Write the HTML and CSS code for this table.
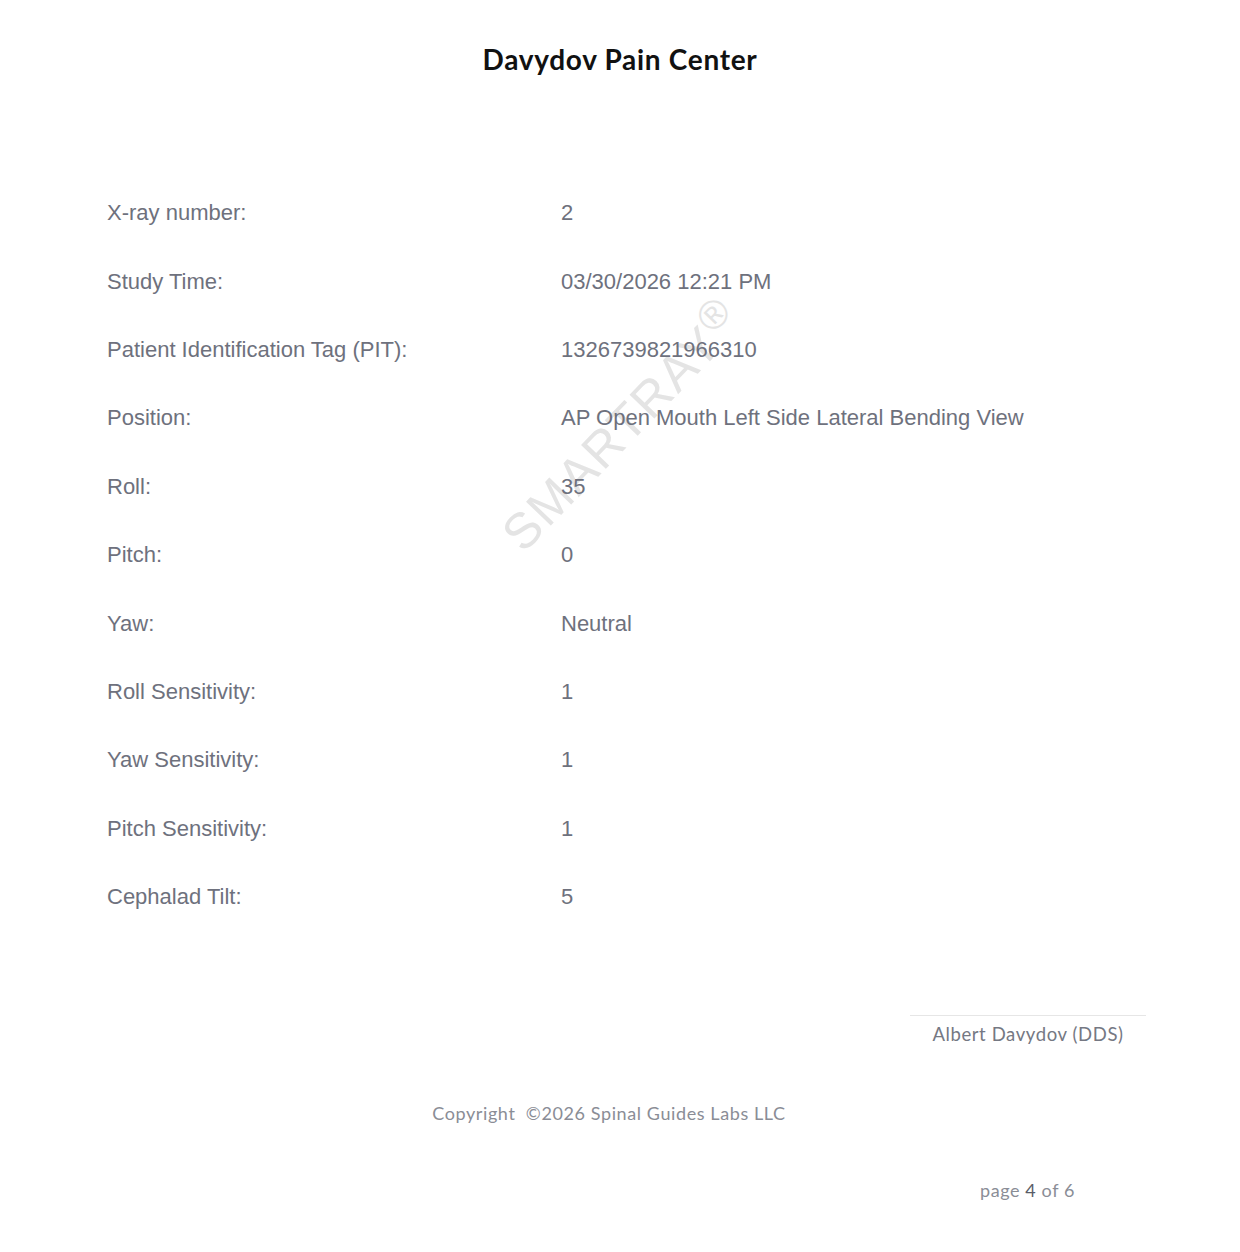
FILE: index.html
```html
<!DOCTYPE html>
<html>
<head>
<meta charset="utf-8">
<link rel="stylesheet" href="styles.css">
</head>
<body>
<div class="page">
  <h1 class="title">Davydov Pain Center</h1>
  <div class="details">
    <div class="watermark">SMARTRAY<span class="reg">®</span></div>
    <div class="row"><div class="label">X-ray number:</div><div class="value">2</div></div>
    <div class="row"><div class="label">Study Time:</div><div class="value">03/30/2026 12:21 PM</div></div>
    <div class="row"><div class="label">Patient Identification Tag (PIT):</div><div class="value">1326739821966310</div></div>
    <div class="row"><div class="label">Position:</div><div class="value">AP Open Mouth Left Side Lateral Bending View</div></div>
    <div class="row"><div class="label">Roll:</div><div class="value">35</div></div>
    <div class="row"><div class="label">Pitch:</div><div class="value">0</div></div>
    <div class="row"><div class="label">Yaw:</div><div class="value">Neutral</div></div>
    <div class="row"><div class="label">Roll Sensitivity:</div><div class="value">1</div></div>
    <div class="row"><div class="label">Yaw Sensitivity:</div><div class="value">1</div></div>
    <div class="row"><div class="label">Pitch Sensitivity:</div><div class="value">1</div></div>
    <div class="row"><div class="label">Cephalad Tilt:</div><div class="value">5</div></div>
  </div>
  <div class="signature">
    <div class="sig-box">
      <div class="sig-line"></div>
      <div class="sig-name">Albert Davydov (DDS)</div>
    </div>
  </div>
  <div class="copyright">Copyright&nbsp; ©2026 Spinal Guides Labs LLC</div>
  <div class="pager"><span class="pager-text">page <b>4</b> of 6</span></div>
</div>
</body>
</html>
```
FILE: styles.css
```css
html, body {
  margin: 0;
  padding: 0;
  background: #ffffff;
}

.page {
  width: 1240px;
  height: 1252px;
  position: relative;
  overflow: hidden;
}

.title {
  margin: 0;
  padding-top: 41px;
  font-family: Lato, "Noto Sans", sans-serif;
  font-weight: 700;
  font-size: 28px;
  letter-spacing: 0.7px;
  line-height: 36px;
  color: #111111;
  text-align: center;
}

.details {
  position: relative;
  isolation: isolate;
  margin-top: 102px;
  padding-left: 107px;
  font-family: "Liberation Sans", Arial, sans-serif;
  font-size: 22px;
  color: #6e717d;
}

.row {
  display: flex;
  height: 68.4px;
  align-items: center;
}

.label {
  width: 454px;
}

.watermark {
  position: absolute;
  z-index: -1;
  left: 507px;
  top: 324px;
  font-family: "Liberation Sans", Arial, sans-serif;
  font-size: 50px;
  letter-spacing: 2px;
  line-height: 57px;
  color: #e4e4e4;
  transform: rotate(-46deg);
  transform-origin: left center;
  white-space: nowrap;
  pointer-events: none;
}

.reg {
  font-size: 40px;
  vertical-align: 16px;
}

.signature {
  display: flex;
  justify-content: flex-end;
  padding-right: 94px;
  margin-top: 84px;
}

.sig-box {
  width: 236px;
  text-align: center;
}

.sig-line {
  border-top: 1px solid #e6e6e6;
}

.sig-name {
  margin-top: 6px;
  font-family: Lato, "Noto Sans", sans-serif;
  font-size: 18.5px;
  letter-spacing: 0.6px;
  line-height: 24px;
  color: #757883;
}

.copyright {
  margin-top: 55px;
  padding-right: 22px;
  text-align: center;
  font-family: Lato, "Noto Sans", sans-serif;
  font-size: 18px;
  letter-spacing: 0.6px;
  line-height: 24px;
  color: #8a8d96;
}

.pager {
  display: flex;
  justify-content: flex-end;
  padding-right: 165px;
  margin-top: 53px;
}

.pager-text {
  font-family: Lato, "Noto Sans", sans-serif;
  font-size: 18px;
  letter-spacing: 0.6px;
  line-height: 24px;
  color: #8a8d96;
}

.pager-text b {
  font-weight: 400;
  color: #5a5d68;
}
```
